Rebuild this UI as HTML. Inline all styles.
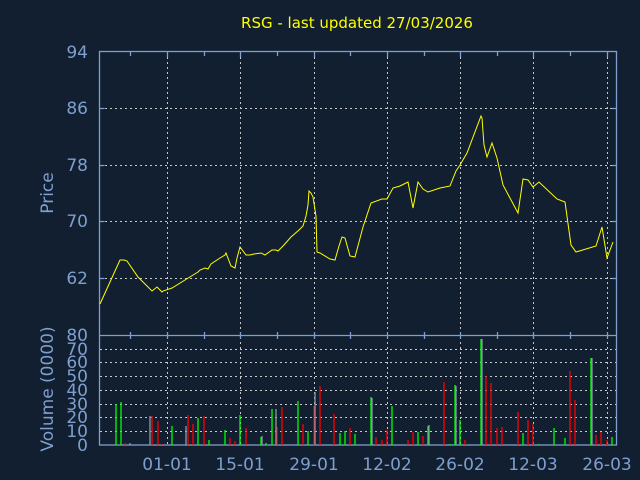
<!DOCTYPE html>
<html><head><meta charset="utf-8"><style>
html,body{margin:0;padding:0;background:#111f30;}
svg{display:block}
text{font-family:"DejaVu Sans","Liberation Sans",sans-serif;}
</style></head><body>
<svg width="640" height="480" viewBox="0 0 640 480" xmlns="http://www.w3.org/2000/svg">
<rect width="640" height="480" fill="#111f30"/>
<text x="357" y="28" fill="#ffff00" font-size="15" text-anchor="middle">RSG - last updated 27/03/2026</text>
<g stroke="#c8c8c8" stroke-width="1" stroke-dasharray="2,3" fill="none">
<path d="M167.5 52V445M240.5 52V445M314.5 52V445M387.5 52V445M460.5 52V445M533.5 52V445M607.5 52V445"/>
<path d="M100 108.5H617M100 165.5H617M100 221.5H617M100 278.5H617"/>
<path d="M100 349.5H617M100 362.5H617M100 376.5H617M100 390.5H617M100 404.5H617M100 417.5H617M100 431.5H617"/>
</g>
<g stroke="#7f9fcf" stroke-width="1.3" fill="none">
<rect x="99.5" y="51.5" width="517" height="393.5"/>
<path d="M99.5 335.5H617"/>
<path d="M130.5 52v4M204.5 52v4M277.5 52v4M350.5 52v4M424.5 52v4M497.5 52v4M570.5 52v4"/>
<path d="M167.5 52v5M240.5 52v5M314.5 52v5M387.5 52v5M460.5 52v5M533.5 52v5M607.5 52v5"/>
<path d="M130.5 332v7M204.5 332v7M277.5 332v7M350.5 332v7M424.5 332v7M497.5 332v7M570.5 332v7M167.5 332v7M240.5 332v7M314.5 332v7M387.5 332v7M460.5 332v7M533.5 332v7M607.5 332v7"/>
<path d="M99.5 108.5h5M99.5 165.5h5M99.5 221.5h5M99.5 278.5h5M617 108.5h-5M617 165.5h-5M617 221.5h-5M617 278.5h-5"/>
</g>
<g fill="#7f9fcf" font-size="17" text-anchor="end">
<text x="88" y="58">94</text><text x="88" y="114">86</text><text x="88" y="171">78</text><text x="88" y="227">70</text><text x="88" y="284">62</text>
<text x="88" y="341">80</text><text x="88" y="355">70</text><text x="88" y="368">60</text><text x="88" y="382">50</text><text x="88" y="396">40</text><text x="88" y="410">30</text><text x="88" y="423">20</text><text x="88" y="437">10</text><text x="88" y="451">0</text>
</g>
<g fill="#7f9fcf" font-size="17" text-anchor="middle">
<text x="167" y="470">01-01</text><text x="240" y="470">15-01</text><text x="314" y="470">29-01</text><text x="387" y="470">12-02</text><text x="460" y="470">26-02</text><text x="533" y="470">12-03</text><text x="607" y="470">26-03</text>
</g>
<text transform="translate(53,193) rotate(-90)" fill="#7f9fcf" font-size="17" text-anchor="middle">Price</text>
<text transform="translate(53,389) rotate(-90)" fill="#7f9fcf" font-size="17" text-anchor="middle">Volume (0000)</text>
<polyline fill="none" stroke="#ffff00" stroke-width="1" points="100,304 120,260 124,260 127,261 138,277 152,291 157,287 162,292 163,291 172,288 185,280 198,272 200,270 205,268 208,269 211,264 220,258 225,255 226,253 231,266 235,268 237,258 240,247 243,251 246,255 250,255 254,254 261,253 265,255 272,250 276,250 278,251 283,246 291,237 299,230 303,226 306,216 308,205 309,191 311,193 313,197 316,216 317,252 320,253 330,259 335,260 339,246 342,237 345,238 350,256 355,257 363,227 371,203 382,199 387,199 393,188 400,186 408,182 413,208 418,182 423,189 428,192 440,188 450,186 456,171 460,165 467,153 481,116 482,118 484,145 487,157 492,143 497,158 503,185 518,213 523,179 528,180 533,187 539,182 557,199 565,202 571,245 576,252 596,246 602,227 607,258 613,242"/>
<g stroke-width="1.3">
<path stroke="#00ff00" d="M116 445V404M121 445V402M172 445V426M198 445V418M209 445V440M225 445V430M240 445V415M261 445V437M266 445V443M272 445V409M298 445V401M308 445V431M340 445V433M345 445V431M355 445V434M371 445V397M392 445V406M418 445V432M429 445V425M450 445V444M455 445V385M460 445V420M481 445V339M523 445V433M539 445V444M554 445V428M565 445V438M591 445V358M612 445V437"/>
<path stroke="#ff0000" d="M125 445V443M152 445V416M158 445V421M162 445V444M188 445V415M193 445V424M204 445V416M230 445V438M235 445V441M246 445V428M277 445V427M282 445V407M303 445V424M314 445V406M320 445V386M334 445V414M350 445V428M376 445V437M382 445V440M387 445V430M408 445V440M413 445V432M423 445V436M444 445V382M465 445V440M486 445V376M491 445V383M497 445V428M502 445V427M518 445V412M528 445V420M533 445V424M570 445V371M575 445V400M596 445V435M601 445V432M607 445V440"/>
<path stroke="#8a9aaa" d="M130 445V443M150 445V416M186 445V426M262 445V436M276 445V409M315 445V392M372 445V398M428 445V426M456 445V386M482 445V339M592 445V358"/>
</g>
</svg>
</body></html>
